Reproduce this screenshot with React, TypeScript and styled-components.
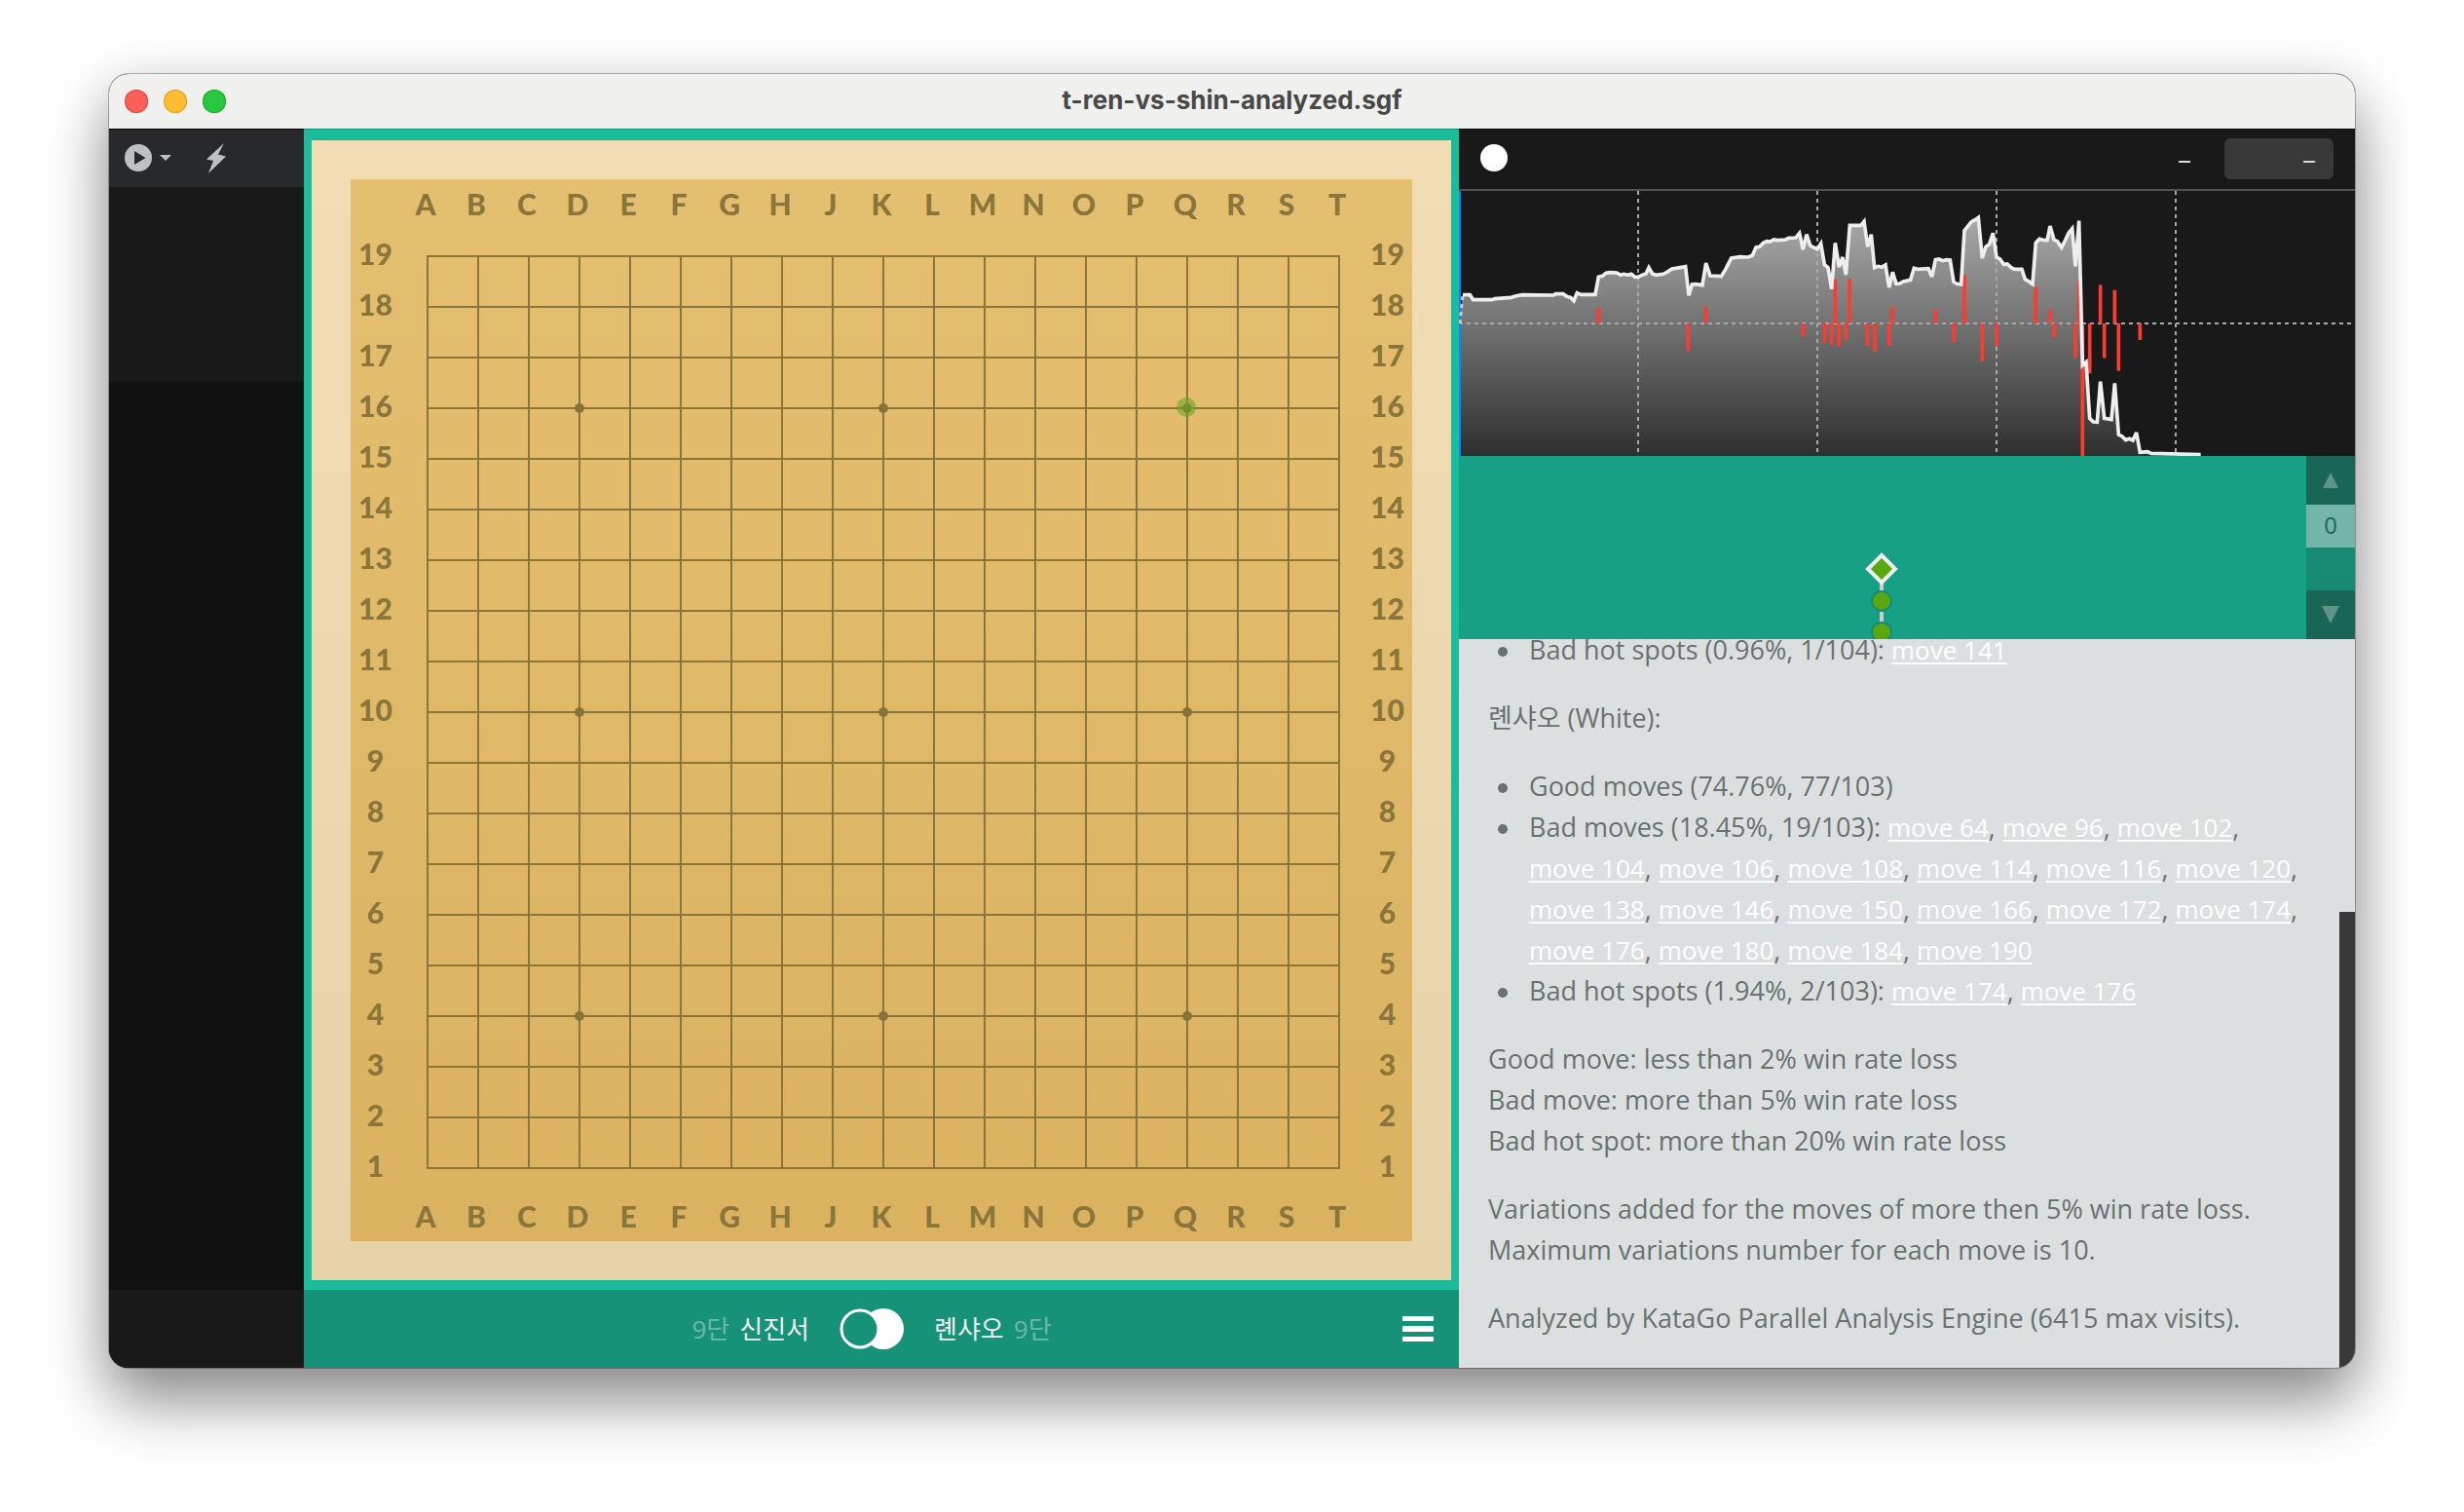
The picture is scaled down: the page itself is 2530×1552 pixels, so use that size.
import React from "react";
import styled, { createGlobalStyle } from "styled-components";

const GlobalStyle = createGlobalStyle`
  * { box-sizing: border-box; }
  body {
    margin: 0;
    background: #fff;
    font-family: "Open Sans", "Noto Sans CJK KR", sans-serif;
  }
  button, input { font: inherit; border: 0; padding: 0; margin: 0; background: none; color: inherit; }
`;

const Desktop = styled.div`
  min-height: 100vh;
  padding: 76px 112px 148px;
  display: flex;
`;

const Window = styled.main`
  flex: 1;
  display: flex;
  flex-direction: column;
  border-radius: 20px;
  overflow: hidden;
  background: #111;
  box-shadow: 0 0 0 1px rgba(0, 0, 0, 0.28), 0 36px 64px rgba(0, 0, 0, 0.4), 0 10px 60px rgba(0, 0, 0, 0.14);
`;

const TitleBar = styled.header`
  height: 56px;
  padding: 0 16px;
  display: grid;
  grid-template-columns: 1fr auto 1fr;
  align-items: center;
  background: #f0f0ee;
`;

const Lights = styled.div`
  display: flex;
  gap: 16px;
`;

const Light = styled.button<{ $fill: string; $edge: string }>`
  width: 24px;
  height: 24px;
  border-radius: 50%;
  background: ${(p) => p.$fill};
  box-shadow: inset 0 0 0 1px ${(p) => p.$edge};
`;

const Title = styled.h1`
  margin: 0;
  padding-bottom: 2px;
  font: 700 26px/32px Inter, sans-serif;
  color: #484847;
`;

const Body = styled.div`
  flex: 1;
  min-height: 0;
  display: grid;
  grid-template-columns: 200px minmax(0, 1186fr) minmax(0, 920fr);
`;

const Sidebar = styled.aside`
  display: flex;
  flex-direction: column;
  background: #111;
`;

const Toolbar = styled.div`
  height: 60px;
  padding: 0 16px;
  display: flex;
  align-items: center;
  gap: 34px;
  background: #28292d;
  box-shadow: inset 0 1px 0 #000;
`;

const ToolButton = styled.button`
  height: 32px;
  display: flex;
  align-items: center;
  gap: 8px;
`;

const EnginePane = styled.div`
  height: 200px;
  background: #191919;
`;

const SidebarFoot = styled.div`
  height: 80px;
  margin-top: auto;
  background: #191919;
`;

const BoardColumn = styled.section`
  display: flex;
  flex-direction: column;
  background: #1bbc9b;
  box-shadow: inset 0 1px 0 #0b8f74;
`;

const BoardArea = styled.div`
  flex: 1;
  padding: 12px 8px 10px;
  display: flex;
`;

const Mat = styled.div`
  flex: 1;
  display: flex;
  align-items: center;
  justify-content: center;
  background: linear-gradient(#f2dcb3, #e7d2a9);
`;

const Goban = styled.div`
  display: grid;
  grid-template-columns: 51px auto 51px;
  grid-template-rows: 51px auto 51px;
  background: linear-gradient(#e5bf70, #dab260);
  color: #8a763a;
  font: 900 30px/36px Lato, sans-serif;
`;

const Letters = styled.div`
  grid-column: 2;
  padding-bottom: 2px;
  display: grid;
  grid-template-columns: repeat(19, 52px);
  align-items: center;
  justify-items: center;
`;

const Numbers = styled.div`
  display: grid;
  grid-template-rows: repeat(19, 52px);
  align-items: center;
  justify-items: center;
`;

const RowNumber = styled.span`
  padding-bottom: 2px;
`;

const Corner = styled.span``;

const GameBar = styled.footer`
  height: 80px;
  padding-right: 20px;
  display: grid;
  grid-template-columns: 76px 1fr 76px;
  align-items: center;
  background: #169279;
`;

const Players = styled.div`
  grid-column: 2;
  display: grid;
  grid-template-columns: 1fr auto 1fr;
  gap: 31px;
  align-items: center;
  color: #eee;
`;

const Player = styled.div<{ $side: "left" | "right" }>`
  display: flex;
  gap: 10px;
  justify-content: ${(p) => (p.$side === "left" ? "flex-end" : "flex-start")};
  font-size: 26px;
  line-height: 42px;
`;

const Rank = styled.span`
  color: #6fb8a8;
`;

const TurnButton = styled.button`
  display: flex;
`;

const MenuButton = styled.button`
  height: 48px;
  padding-right: 6px;
  display: flex;
  align-items: center;
  justify-content: flex-end;
`;

const RightColumn = styled.section`
  display: flex;
  flex-direction: column;
  min-height: 0;
  background: #191919;
`;

const WinrateHead = styled.div`
  height: 64px;
  padding: 0 22px;
  display: flex;
  align-items: center;
  border-bottom: 2px solid #525252;
  box-shadow: inset 0 1px 0 #000;
`;

const Stone = styled.span`
  width: 28px;
  height: 28px;
  margin-bottom: 2px;
  border-radius: 50%;
  background: #fff;
`;

const Score = styled.span`
  height: 42px;
  margin-left: auto;
  margin-right: 34px;
  font-size: 28px;
  line-height: 40px;
  color: #ddd;
`;

const ScoreBox = styled.span`
  width: 112px;
  height: 42px;
  padding-right: 18px;
  border-radius: 6px;
  background: #393939;
  color: #ddd;
  font-size: 28px;
  line-height: 40px;
  text-align: right;
`;

const Chart = styled.svg`
  display: block;
  width: 100%;
  height: 272px;
`;

const TreeRow = styled.div`
  height: 188px;
  display: flex;
  background: #18a086;
`;

const Tree = styled.div`
  flex: 1;
  padding-right: 2px;
  display: flex;
  justify-content: center;
  overflow: hidden;
`;

const Slider = styled.div`
  width: 50px;
  display: flex;
  flex-direction: column;
  background: #178a74;
`;

const Step = styled.button`
  height: 50px;
  display: flex;
  align-items: center;
  justify-content: center;
  background: #196657;
`;

const Thumb = styled.span`
  height: 44px;
  margin-bottom: auto;
  background: #73b5a8;
  color: #196657;
  font-size: 24px;
  line-height: 42px;
  text-align: center;
`;

const Comments = styled.div`
  flex: 1;
  min-height: 0;
  display: flex;
  background: #dcdfe0;
`;

const CommentText = styled.article`
  flex: 1;
  height: 748px;
  padding: 0 30px;
  padding-bottom: 30px;
  display: flex;
  flex-direction: column;
  justify-content: flex-end;
  gap: 28px;
  font-size: 27px;
  line-height: 42px;
  color: #66726f;
  p { margin: 0; }
`;

const List = styled.ul`
  margin: 0;
  padding-left: 42px;
  list-style: none;
  li::before {
    content: "";
    display: inline-block;
    width: 10px;
    height: 10px;
    margin-left: -32px;
    margin-right: 22px;
    border-radius: 50%;
    background: #66726f;
    vertical-align: 3px;
  }
`;

const MoveLink = styled.a`
  color: #fff;
  font-size: 26px;
  text-decoration: underline;
  text-decoration-thickness: 2px;
  text-underline-offset: 3px;
  white-space: nowrap;
`;

const Scrollbar = styled.div`
  width: 16px;
  display: flex;
  flex-direction: column;
  justify-content: flex-end;
`;

const ScrollThumb = styled.div`
  height: 468px;
  background: #393939;
`;

const LETTERS = "ABCDEFGHJKLMNOPQRST".split("");
const ROWS = Array.from({ length: 19 }, (_, i) => 19 - i);
const CELLS = Array.from({ length: 19 }, (_, i) => i * 52);
const STARS = [3, 9, 15];

function Grid() {
  return (
    <svg width="988" height="988" viewBox="0 0 988 988" aria-label="Go board">
      {CELLS.map((c) => (
        <g key={c} fill="#8a763a">
          <rect x={27 + c} y="27" width="2" height="938" />
          <rect x="27" y={27 + c} width="938" height="2" />
        </g>
      ))}
      {STARS.map((x) =>
        STARS.map((y) => <circle key={`${x}-${y}`} cx={28 + x * 52} cy={28 + y * 52} r="5" fill="#86733a" />)
      )}
      <circle cx="807" cy="183" r="10" fill="#62a81f" fillOpacity="0.55" />
    </svg>
  );
}

const LINE =
  "66,548 88,548 98,563 155,563 165,560 215,556 230,551 250,548 345,549 352,545 375,545 386,553 398,556 408,566 418,542 430,547 474,547 484,493 496,490 507,481 520,479 540,480 552,487 562,484 574,487 585,484 596,493 606,493 618,487 630,483 639,464 650,483 661,487 683,484 695,478 710,468 735,464 752,461 762,550 772,516 783,515 804,518 815,450 828,489 862,491 875,470 893,435 920,431 945,432 958,427 969,402 980,400 992,388 1003,383 1013,384 1024,378 1035,380 1060,378 1070,373 1092,372 1103,358 1114,408 1125,362 1136,396 1147,402 1158,407 1169,390 1180,455 1191,464 1202,530 1213,388 1225,462 1236,432 1246,486 1258,334 1292,334 1302,322 1313,400 1324,362 1334,464 1345,460 1356,463 1368,456 1379,525 1390,478 1401,514 1412,513 1423,507 1445,502 1456,466 1467,469 1500,467 1511,492 1522,440 1533,438 1544,443 1555,440 1567,441 1578,508 1588,514 1601,516 1611,350 1632,324 1644,317 1654,310 1666,435 1677,400 1688,392 1699,358 1710,432 1721,438 1732,454 1743,453 1755,464 1766,469 1788,469 1798,500 1810,507 1821,515 1831,388 1842,376 1853,379 1866,380 1875,336 1887,378 1898,384 1910,402 1920,384 1932,358 1943,344 1953,460 1964,320 1975,765 1986,755 1997,928 2008,939 2020,940 2030,815 2042,928 2064,932 2074,820 2086,978 2097,984 2108,995 2119,991 2130,996 2141,972 2152,1033 2175,1031 2186,1036 2339,1040";

const LOSSES: [number, number][] = [
  [484, 588], [760, 721], [815, 584], [1114, 675], [1180, 696], [1202, 701], [1213, 498], [1224, 707],
  [1246, 687], [1257, 498], [1312, 705], [1335, 722], [1379, 704], [1389, 586], [1522, 592], [1578, 695],
  [1611, 486], [1666, 753], [1710, 706], [1831, 522], [1875, 593], [1887, 678], [1953, 743], [1964, 505],
  [1975, 1044], [1997, 790], [2030, 517], [2042, 743], [2074, 533], [2086, 782], [2152, 687],
];

function WinrateChart() {
  return (
    <Chart viewBox="54 228 2760 816" preserveAspectRatio="none" aria-label="Winrate graph">
      <defs>
        <linearGradient id="area" gradientUnits="userSpaceOnUse" x1="0" y1="228" x2="0" y2="1044">
          <stop offset="0" stopColor="#b6b6b6" />
          <stop offset="1" stopColor="#2f2f2f" />
        </linearGradient>
      </defs>
      <polygon points={`54,1044 54,636 ${LINE} 2339,1044`} fill="url(#area)" />
      {[606, 1158, 1710, 2262].map((x) => (
        <line key={x} x1={x} x2={x} y1="228" y2="1044" stroke="#a9a9a9" strokeWidth="6" strokeDasharray="12 12" />
      ))}
      <line x1="54" x2="2814" y1="636" y2="636" stroke="#a9a9a9" strokeWidth="6" strokeDasharray="12 12" />
      <rect x="54" y="228" width="6" height="816" fill="#0a84ff" />
      {LOSSES.map(([x, y]) => (
        <line key={x} x1={x} x2={x} y1="636" y2={y} stroke="#ff3b30" strokeWidth="11" />
      ))}
      <path d="M57 636 66 548" stroke="#ccc" strokeWidth="9" strokeDasharray="12 12" fill="none" />
      <polyline points={LINE} fill="none" stroke="#eee" strokeWidth="11" strokeLinejoin="miter" strokeMiterlimit="3" />
    </Chart>
  );
}

const Moves = ({ list }: { list: number[] }) => (
  <>
    {list.map((n, i) => (
      <React.Fragment key={n}>
        {i > 0 && ", "}
        <MoveLink href={`#${n}`}>move {n}</MoveLink>
      </React.Fragment>
    ))}
  </>
);

export default function App() {
  return (
    <Desktop>
      <GlobalStyle />
      <Window>
        <TitleBar>
          <Lights>
            <Light aria-label="Close" $fill="#ff5f57" $edge="#e14640" />
            <Light aria-label="Minimize" $fill="#febc2e" $edge="#dfa023" />
            <Light aria-label="Zoom" $fill="#28c840" $edge="#1aab29" />
          </Lights>
          <Title>t-ren-vs-shin-analyzed.sgf</Title>
        </TitleBar>
        <Body>
          <Sidebar>
            <Toolbar>
              <ToolButton aria-label="Attach engine">
                <svg width="28" height="28" viewBox="0 0 28 28">
                  <path fill="#bfc0c2" fillRule="evenodd" d="M14 0a14 14 0 1 1 0 28a14 14 0 1 1 0-28zM10 7v14l11.500-7z" />
                </svg>
                <svg width="12" height="6" viewBox="0 0 12 6">
                  <path fill="#bfc0c2" d="M0 0h12L6 6z" />
                </svg>
              </ToolButton>
              <ToolButton aria-label="Generate move">
                <svg width="24" height="32" viewBox="0 0 24 32">
                  <path fill="#bfc0c2" d="M20 1 2 17.500 9 19 4 32 22 14.500 14 12.500z" />
                </svg>
              </ToolButton>
            </Toolbar>
            <EnginePane />
            <SidebarFoot />
          </Sidebar>

          <BoardColumn>
            <BoardArea>
              <Mat>
                <Goban>
                  <Letters>{LETTERS.map((l) => <span key={l}>{l}</span>)}</Letters>
                  <Corner />
                  <Numbers>{ROWS.map((n) => <RowNumber key={n}>{n}</RowNumber>)}</Numbers>
                  <Grid />
                  <Numbers>{ROWS.map((n) => <RowNumber key={n}>{n}</RowNumber>)}</Numbers>
                  <Letters>{LETTERS.map((l) => <span key={l}>{l}</span>)}</Letters>
                </Goban>
              </Mat>
            </BoardArea>
            <GameBar>
              <Players>
                <Player $side="left"><Rank>9단</Rank><span>신진서</span></Player>
                <TurnButton aria-label="Change player">
                  <svg width="66" height="42" viewBox="0 0 66 42">
                    <circle cx="45" cy="21" r="21" fill="#fff" />
                    <circle cx="21" cy="21" r="19" fill="#169279" stroke="#fff" strokeWidth="3" />
                  </svg>
                </TurnButton>
                <Player $side="right"><span>롄샤오</span><Rank>9단</Rank></Player>
              </Players>
              <MenuButton aria-label="Menu">
                <svg width="32" height="28" viewBox="0 0 32 28" fill="#fff">
                  <rect y="1" width="32" height="5" rx="1" />
                  <rect y="11" width="32" height="6" rx="1" />
                  <rect y="22" width="32" height="5" rx="1" />
                </svg>
              </MenuButton>
            </GameBar>
          </BoardColumn>

          <RightColumn>
            <WinrateHead>
              <Stone />
              <Score>–</Score>
              <ScoreBox>–</ScoreBox>
            </WinrateHead>
            <WinrateChart />
            <TreeRow>
              <Tree>
                <svg width="40" height="188" viewBox="0 0 40 188" aria-label="Game tree">
                  <path d="M20 116V188" stroke="#ccc" strokeWidth="4" />
                  <path d="M20 102 34 116 20 130 6 116z" fill="#59a80f" stroke="#eee" strokeWidth="4" />
                  <circle cx="20" cy="149" r="10" fill="#59a80f" stroke="#178a74" strokeWidth="2" />
                  <circle cx="20" cy="181" r="10" fill="#59a80f" stroke="#178a74" strokeWidth="2" />
                </svg>
              </Tree>
              <Slider>
                <Step aria-label="Previous move">
                  <svg width="16" height="16" viewBox="0 0 16 16"><path fill="#5e9488" d="M8 0 16 16H0z" /></svg>
                </Step>
                <Thumb>0</Thumb>
                <Step aria-label="Next move">
                  <svg width="18" height="18" viewBox="0 0 18 18"><path fill="#5e9488" d="M0 0H18L9 18z" /></svg>
                </Step>
              </Slider>
            </TreeRow>
            <Comments>
              <CommentText>
                <List>
                  <li>Bad hot spots (0.96%, 1/104): <Moves list={[141]} /></li>
                </List>
                <p>롄샤오 (White):</p>
                <List>
                  <li>Good moves (74.76%, 77/103)</li>
                  <li>
                    Bad moves (18.45%, 19/103):{" "}
                    <Moves list={[64, 96, 102, 104, 106, 108, 114, 116, 120, 138, 146, 150, 166, 172, 174, 176, 180, 184, 190]} />
                  </li>
                  <li>Bad hot spots (1.94%, 2/103): <Moves list={[174, 176]} /></li>
                </List>
                <p>
                  Good move: less than 2% win rate loss<br />
                  Bad move: more than 5% win rate loss<br />
                  Bad hot spot: more than 20% win rate loss
                </p>
                <p>
                  Variations added for the moves of more then 5% win rate loss.<br />
                  Maximum variations number for each move is 10.
                </p>
                <p>Analyzed by KataGo Parallel Analysis Engine (6415 max visits).</p>
              </CommentText>
              <Scrollbar><ScrollThumb /></Scrollbar>
            </Comments>
          </RightColumn>
        </Body>
      </Window>
    </Desktop>
  );
}
